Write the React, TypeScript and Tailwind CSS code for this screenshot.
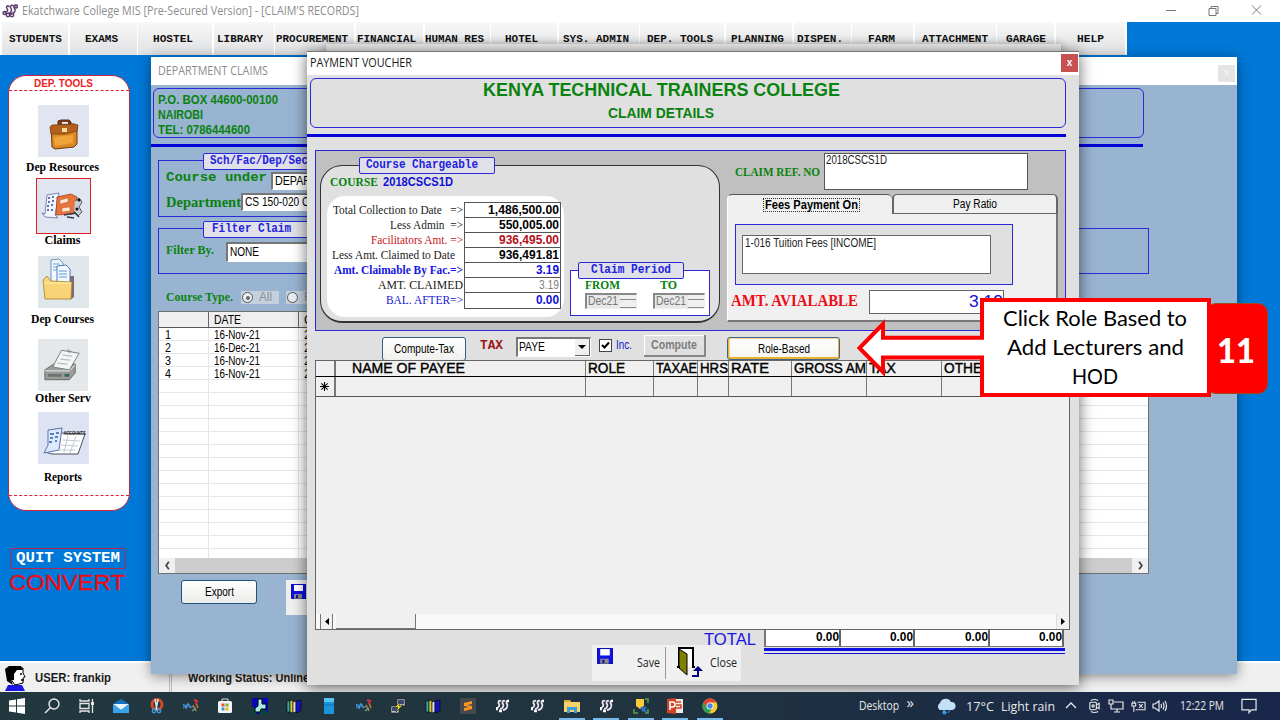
import { useLayoutEffect, useRef, useState } from "react";
import type { ReactNode } from "react";

/** A line of text condensed or expanded to the width its class gives it. */
function Fit({ className = "", children }: { className?: string; children: ReactNode }) {
  const outer = useRef<HTMLSpanElement>(null);
  const inner = useRef<HTMLSpanElement>(null);
  const [scale, setScale] = useState(1);
  useLayoutEffect(() => {
    if (outer.current && inner.current && inner.current.offsetWidth > 0) {
      setScale(outer.current.clientWidth / inner.current.getBoundingClientRect().width);
    }
  }, []);
  return (
    <span ref={outer} className={"block shrink-0 whitespace-pre " + className}>
      <span ref={inner} className="inline-block origin-left" style={{ transform: `scaleX(${scale})` }}>
        {children}
      </span>
    </span>
  );
}

const mono = "font-['Liberation_Mono',monospace] font-bold";
const serif = "font-['Liberation_Serif',serif]";
const segoe = "font-['Open_Sans','Noto_Sans',sans-serif]";

const menu = [
  { t: "STUDENTS", b: "w-[66px]", f: "w-[53px]" },
  { t: "EXAMS", b: "w-[67px] pr-[4px]", f: "w-[33px]" },
  { t: "HOSTEL", b: "w-[74px] pr-[4px]", f: "w-[40px]" },
  { t: "LIBRARY", b: "w-[60px] pr-[8px]", f: "w-[46px]" },
  { t: "PROCUREMENT", b: "w-[79px] pr-[6px]", f: "w-[72px]" },
  { t: "FINANCIAL", b: "w-[67px] pr-[5px]", f: "w-[59px]" },
  { t: "HUMAN RES", b: "w-[65px] pr-[6px]", f: "w-[59px]" },
  { t: "HOTEL", b: "w-[66px] pr-[6px]", f: "w-[33px]" },
  { t: "SYS. ADMIN", b: "w-[80px] pr-[6px]", f: "w-[66px]" },
  { t: "DEP. TOOLS", b: "w-[84px] pr-[4px]", f: "w-[66px]" },
  { t: "PLANNING", b: "w-[66px] pr-[3px]", f: "w-[53px]" },
  { t: "DISPEN.", b: "w-[57px] pr-[4px]", f: "w-[46px]" },
  { t: "FARM", b: "w-[61px] pr-[2px]", f: "w-[27px]" },
  { t: "ATTACHMENT", b: "w-[81px]", f: "w-[66px]" },
  { t: "GARAGE", b: "w-[57px]", f: "w-[40px]" },
  { t: "HELP", b: "w-[69px]", f: "w-[27px]" },
];

function Logo({ className = "h-4 w-4", color = "#5f3f70" }: { className?: string; color?: string }) {
  return (
    <svg viewBox="0 0 16 16" className={className} fill="none" stroke={color} strokeWidth="1.5" strokeLinecap="round">
      <path d="M7 3.5C5.500 2 3.500 4 5 5.500S5.500 9 3 9M11 2.500C9 1.500 7.500 4 9 5.500S9 10 6 10.500M14.500 2.500C12.500 1.500 11 4 12.500 5.500S13 10 9.500 11" />
      <circle cx="2.500" cy="10" r="1.500" />
      <circle cx="6" cy="12" r="1.700" />
      <circle cx="10" cy="12" r="1.700" />
      <circle cx="14" cy="3.500" r="1.500" />
    </svg>
  );
}

function Briefcase() {
  return (
    <svg viewBox="0 0 51 52" className="h-[52px] w-[51px] bg-[#e1e5f2]">
      <path d="M20 20v-4l3-1h8l2 2v4" fill="#7c3a18" stroke="#5a2a10" />
      <path d="M24 19v-2h6v2" fill="#e1e5f2" />
      <path d="M13 21l23-2 3 2 0 18-3 3-19 2-3-2z" fill="#d98824" stroke="#6b3a12" strokeWidth="1" />
      <path d="M12 22l2-2 22-1 4 1-1 6-12 3-14 0z" fill="#b5611e" stroke="#6b3a12" strokeWidth=".7" />
      <path d="M16 32l19-2v8l-18 3z" fill="#f0a338" />
      <rect x="24" y="23" width="5" height="4" fill="#f7dca0" />
    </svg>
  );
}
function ClaimsIcon() {
  return (
    <svg viewBox="0 0 53 54" className="h-[54px] w-[53px] bg-[#e1e5f2]">
      <path d="M10 16l12-2-4 22 3 3-13-1-3-4 3 1z" fill="#f4f7ff" stroke="#5a6e9a" strokeWidth=".8" />
      <path d="M11 19h2M11 23h2M10 27h2M10 31h2M15 18h2M15 22h2M14 26h2M14 31h2" stroke="#27488c" strokeWidth="1.500" />
      <path d="M20 18l14-3 6 3-3 17-18 1z" fill="#e8743c" stroke="#a0431c" strokeWidth=".8" />
      <path d="M23 21l8-2v4l-8 2zM25 29l8-1v4l-8 1z" fill="#ffe8d4" stroke="#b5603a" strokeWidth=".5" />
      <path d="M38 22l4-3 3 4-3 5 3 5-4 4-4-5" fill="#c8cdd6" stroke="#55595f" />
      <circle cx="42" cy="21" r="1.600" fill="#111" />
      <circle cx="40" cy="30" r="1.600" fill="#111" />
      <path d="M27 36l11-2 4 4M30 38l7 1" stroke="#343a4a" strokeWidth="1.600" fill="none" />
    </svg>
  );
}
function FolderIcon() {
  return (
    <svg viewBox="0 0 51 52" className="h-[52px] w-[51px] bg-[#e0e7ea]">
      <path d="M30 20h6v21l-4 3z" fill="#7a6a7a" />
      <path d="M13 4l8-1 4 4v22H13z" fill="#f3f8ff" stroke="#6d94c5" />
      <path d="M15 8h7M15 11h8M15 14h6" stroke="#70a5dc" />
      <path d="M19 10l9-1 4 4v14H19z" fill="#f3f8ff" stroke="#4d7db8" />
      <path d="M21 15h8M21 18h8M21 21h8" stroke="#5a98dc" />
      <path d="M5 24l4-4 4 5 21 1-1 17H7z" fill="#f8d477" stroke="#a47c28" strokeWidth=".8" />
      <path d="M6 27h27" stroke="#fff0b0" />
    </svg>
  );
}
function ScannerIcon() {
  return (
    <svg viewBox="0 0 51 52" className="h-[52px] w-[50px] bg-[#e4e8ea]">
      <path d="M7 31l9-6h22v9l-6 7H7z" fill="#9a9d9a" stroke="#555" strokeWidth=".8" />
      <path d="M7 32h25l6-6" stroke="#eee" fill="none" />
      <path d="M24 11l18 3-10 17-17-3z" fill="#f4f6f6" stroke="#7a7f80" />
      <path d="M25 16l10 1M23 20l10 1M20 24l10 1" stroke="#b5bcc0" strokeWidth="1.300" />
      <path d="M31 10l1 4M30 12h4" stroke="#778899" />
      <path d="M10 35h14v3H10z" fill="#6e7472" />
      <path d="M27 35h5v3h-5z" fill="#2f6a5b" />
    </svg>
  );
}
function ReportsIcon() {
  return (
    <svg viewBox="0 0 51 52" className="h-[52px] w-[51px] bg-[#dde3f3]">
      <path d="M22 21l25 1-7 20H14l-7-2z" fill="#fff" stroke="#4a4f5a" strokeWidth="1" />
      <path d="M10 18l14-2-3 22-15 3 4-8z" fill="#dce9ff" stroke="#5a74a8" />
      <path d="M12 22h4M12 26h3M11 30h3M18 21h3M17 25h3M17 29h2" stroke="#2e5da8" strokeWidth="1.500" />
      <path d="M25 28l17 1M23 33l17 1M21 38l16 0M30 24l-4 16M38 24l-6 17" stroke="#c3cad6" fill="none" />
      <text x="25.500" y="23" fontSize="5" fontWeight="700" fill="#2a1a1a" fontFamily="Liberation Sans, sans-serif" textLength="22" lengthAdjust="spacingAndGlyphs">ACCOUNTS</text>
    </svg>
  );
}

const tools = [
  { t: "Dep Resources", f: "w-[73px]", icon: <Briefcase />, box: "mt-[15px] h-[53px]", lab: "mt-px" },
  { t: "Claims", f: "w-[36px]", icon: <ClaimsIcon />, box: "mt-[3px] h-[56px] border border-[#e02020]", lab: "-mt-[2px]" },
  { t: "Dep Courses", f: "w-[63px]", icon: <FolderIcon />, box: "mt-[8px] h-[53px]", lab: "mt-[2px]" },
  { t: "Other Serv", f: "w-[56px]", icon: <ScannerIcon />, box: "mt-[12px] h-[53px] -ml-[3px]", lab: "-mt-[2px]" },
  { t: "Reports", f: "w-[38px]", icon: <ReportsIcon />, box: "mt-[6px] h-[53px]", lab: "mt-[4px]" },
];

function Sidebar() {
  return (
    <div className="ml-2 flex w-[122px] shrink-0 flex-col pt-[20px]">
      <div className="h-[436px] rounded-[18px] border-[1.5px] border-[#c8243c] bg-white">
        <div className="flex h-[15px] justify-center border-b border-dashed border-[#e02030] pr-3">
          <Fit className="w-[59px] font-['Liberation_Sans'] text-[11px] leading-[15px] font-bold text-[#ee1c24]">DEP. TOOLS</Fit>
        </div>
        <div className="-mt-px flex flex-col items-center">
          {tools.map((x) => (
            <div key={x.t} className="flex flex-col items-center pr-[13px]">
              <div className={"ml-[1px] shrink-0 " + x.box}>{x.icon}</div>
              <Fit className={`${serif} text-[12px] leading-[16px] font-bold text-black ${x.f} ${x.lab}`}>{x.t}</Fit>
            </div>
          ))}
        </div>
        <div className="mt-[10px] border-t border-dashed border-[#e02030]" />
      </div>
      <div className="mt-[37px] ml-[2px] flex h-[21px] w-[116px] items-center justify-center rounded-[2px] border border-[#b5284c]">
        <Fit className={`${mono} w-[104px] text-[14px] leading-[19px] text-white`}>QUIT SYSTEM</Fit>
      </div>
      <Fit className="mt-px ml-px w-[116px] font-['Liberation_Sans'] text-[22px] leading-[26px] text-[#ee0c14] [-webkit-text-stroke:0.3px_#ee0c14]">CONVERT</Fit>
    </div>
  );
}

function Legend({ className, children }: { className: string; children: ReactNode }) {
  return (
    <div className={`absolute flex justify-center rounded-[2px] border-[1.5px] border-[#2a2ad8] bg-[#e0e0e8] ${className}`}>
      {children}
    </div>
  );
}

function Floppy({ className = "h-[15px] w-[15px]" }: { className?: string }) {
  return (
    <svg viewBox="0 0 15 15" className={className}>
      <path d="M0 0h15v15H1l-1-1z" fill="#1010e8" />
      <rect x="3" y="1" width="9" height="6" fill="#fff" />
      <rect x="3" y="10" width="8" height="5" fill="#8a8a8a" />
      <rect x="5" y="11" width="2" height="3" fill="#1010a0" />
      <path d="M0 0h15v15H0z" fill="none" stroke="#101070" strokeWidth=".7" />
    </svg>
  );
}

const records = ["16-Nov-21", "16-Dec-21", "16-Nov-21", "16-Nov-21", "", "", "", "", "", "", "", "", "", "", "", "", "", ""];

function DepartmentWindow() {
  const sunken = "border border-t-[2px] border-l-[2px] border-[#fff] border-t-[#777] border-l-[#777] bg-white";
  const small = "font-['Liberation_Sans'] text-[12px] text-black";
  return (
    <div className="absolute top-[57px] left-[151px] flex h-[617px] w-[1086px] flex-col bg-[#99b4d1] font-['Liberation_Sans'] shadow-[0_2px_12px_rgba(0,0,0,0.45)]">
      <div className="flex h-7 shrink-0 items-center justify-between bg-white pr-0.5 pl-[7px]">
        <Fit className={`${segoe} w-[110px] text-[12px] leading-[20px] text-[#8c8c8c]`}>DEPARTMENT CLAIMS</Fit>
        <div className="mt-1 flex h-[17px] w-[17px] items-center justify-center bg-[#e4e4e4] text-[9px] font-bold text-[#f4f4f4]">x</div>
      </div>
      <div className="mt-[3px] ml-0.5 h-[50px] w-[991px] shrink-0 rounded-md border-[1.5px] border-[#2a2ad8] pt-[4px] pl-[4px] text-[12px] leading-[15px] font-bold text-[#0a820f]">
        <Fit className="w-[120px]">P.O. BOX 44600-00100</Fit>
        <Fit className="w-[45px]">NAIROBI</Fit>
        <Fit className="w-[92px]">TEL: 0786444600</Fit>
      </div>
      <div className="mt-[6px] h-[3px] w-[992px] shrink-0 bg-[#0202d8]" />
      <div className="relative mt-[13px] ml-[7px] h-[57px] w-[900px] shrink-0 border-[1.5px] border-[#2a2ad8] pl-[7px]">
        <Legend className="-top-[8px] left-[44px] h-[17px] w-[120px]">
          <Fit className={`${mono} -ml-2 w-[98px] text-[12px] leading-[15px] text-[#2222e0]`}>Sch/Fac/Dep/Sec</Fit>
        </Legend>
        <div className="flex pt-[11px]">
          <Fit className={`${mono} -mt-[3px] w-[101px] text-[13px] leading-[17px] text-[#0a820f]`}>Course under</Fit>
          <div className={`${sunken} ml-1 h-[18px] w-[120px] pl-0.5`}>
            <Fit className={`${small} w-[36px] leading-[15px]`}>DEPAR</Fit>
          </div>
        </div>
        <div className="flex pt-[3px]">
          <Fit className={`${serif} w-[75px] text-[15px] leading-[18px] font-bold text-[#0a820f]`}>Department</Fit>
          <div className={`${sunken} h-[18px] w-[160px] pl-0.5`}>
            <Fit className={`${small} w-[70px] leading-[15px]`}>CS 150-020 Co</Fit>
          </div>
        </div>
      </div>
      <div className="relative mt-[11px] ml-[7px] flex h-[46px] w-[991px] shrink-0 border-[1.5px] border-[#2a2ad8] pt-[13px] pl-[7px]">
        <Legend className="-top-[8px] left-[44px] h-[17px] w-[120px]">
          <Fit className={`${mono} -ml-[24px] w-[79px] text-[12px] leading-[15px] text-[#2222e0]`}>Filter Claim</Fit>
        </Legend>
        <Fit className={`${serif} w-[48px] text-[13px] leading-[16px] font-bold text-[#0a820f]`}>Filter By.</Fit>
        <div className={`${sunken} ml-[12px] h-[20px] w-[160px] pl-0.5`}>
          <Fit className={`${small} w-[29px] leading-[16px]`}>NONE</Fit>
        </div>
      </div>
      <div className="mt-[16px] ml-[15px] flex h-[15px] shrink-0 items-center">
        <Fit className={`${serif} w-[67px] text-[12px] leading-[15px] font-bold text-[#0a820f]`}>Course Type.</Fit>
        <div className="ml-2 flex h-[13px] w-[38px] items-center bg-[#c4d0de]">
          <span className="ml-px flex h-[11px] w-[11px] items-center justify-center rounded-full border-[1.5px] border-[#555] bg-[#e8eef4]">
            <span className="h-1 w-1 rounded-full bg-[#666]" />
          </span>
          <Fit className="ml-[6px] w-[13px] text-[12px] leading-[13px] text-[#8a8f96]">All</Fit>
        </div>
        <div className="ml-[7px] flex h-[13px] w-[60px] items-center bg-[#c4d0de]">
          <span className="ml-px h-[11px] w-[11px] rounded-full border-[1.5px] border-[#555] bg-[#e8eef4]" />
          <span className="ml-[6px] text-[12px] leading-[13px] text-[#8a8f96]">Full</span>
        </div>
      </div>
      <div className="mt-[6px] ml-[7px] flex h-[263px] w-[991px] shrink-0 flex-col border border-[#707070] bg-white">
        <div className="flex h-[16px] border-b border-[#555] bg-[#efefef]">
          <div className="w-[50px] border-r border-[#666]" />
          <div className="w-[90px] border-r border-[#666] pl-[5px]">
            <Fit className={`${small} w-[27px] leading-[16px]`}>DATE</Fit>
          </div>
          <div className={`${small} pl-[5px] leading-[16px]`}>CLAIM</div>
        </div>
        <div className="h-[230px] overflow-hidden">
          {records.map((d, i) => (
            <div key={i} className="flex h-[13px] border-b border-[#e6e6e6]">
              <div className="w-[50px] border-r border-[#e6e6e6] pl-[6px]">
                {d && <Fit className={`${small} w-[6px] leading-[14px]`}>{i + 1}</Fit>}
              </div>
              <div className="w-[90px] border-r border-[#e6e6e6] pl-[5px]">
                {d && <Fit className={`${small} w-[46px] leading-[14px]`}>{d}</Fit>}
              </div>
              <div className={`${small} pl-[5px] leading-[14px]`}>{d ? "2018" : ""}</div>
            </div>
          ))}
        </div>
        <div className="flex h-[15px] items-center justify-between bg-[#cdcdcd]">
          {["M7 2L4 6l3 4", "M4 2l3 4-3 4"].map((d) => (
            <div key={d} className="flex h-[15px] w-[16px] items-center justify-center bg-[#f0f0f0]">
              <svg viewBox="0 0 11 12" className="h-[11px] w-[11px]" fill="none" stroke="#444" strokeWidth="1.900"><path d={d} /></svg>
            </div>
          ))}
        </div>
      </div>
      <div className="mt-[6px] ml-[30px] flex shrink-0">
        <div className="flex h-[24px] w-[76px] items-center justify-center rounded-[3px] border border-[#1f5378] bg-linear-to-b from-white to-[#ececea]">
          <Fit className="w-[29px] text-[12px] leading-[20px] text-black">Export</Fit>
        </div>
        <div className="ml-[29px] h-[35px] w-[100px] bg-[#f0f0f0] pt-[4px] pl-[5px]"><Floppy /></div>
      </div>
    </div>
  );
}

const amounts = [
  { l: "Total Collection to Date   =>", lw: "w-[130px]", lc: "text-[#222]", v: "1,486,500.00", vw: "w-[71px]", vc: "font-bold text-black" },
  { l: "Less Admin  =>", lw: "w-[73px]", lc: "text-[#222]", v: "550,005.00", vw: "w-[60px]", vc: "font-bold text-black" },
  { l: "Facilitators Amt. =>", lw: "w-[92px]", lc: "text-[#c81420]", v: "936,495.00", vw: "w-[60px]", vc: "font-bold text-[#b41018]" },
  { l: "Less Amt. Claimed to Date", lw: "w-[123px] mr-[8px]", lc: "text-[#222]", v: "936,491.81", vw: "w-[60px]", vc: "font-bold text-black" },
  { l: "Amt. Claimable By Fac.=>", lw: "w-[129px]", lc: "font-bold text-[#1414e0]", v: "3.19", vw: "w-[23px]", vc: "font-bold text-[#1010d8]" },
  { l: "AMT. CLAIMED", lw: "w-[85px]", lc: "text-[#222]", v: "3.19", vw: "w-[20px]", vc: "text-[#808080]" },
  { l: "BAL. AFTER=>", lw: "w-[77px]", lc: "text-[#2020d0]", v: "0.00", vw: "w-[23px]", vc: "font-bold text-[#1010d8]" },
];

function Spinner() {
  return (
    <div className="flex h-[16px] w-[52px] items-center justify-between border border-t-[2px] border-l-[2px] border-[#eee] border-t-[#888] border-l-[#888] bg-[#e8e8e8] pl-[1px]">
      <Fit className="w-[30px] text-[12px] leading-[15px] text-[#777]">Dec21</Fit>
      <div className="flex h-[13px] w-[16px] flex-col justify-between bg-[#f0f0f0]">
        <div className="h-[5px] border-b border-[#888]" />
        <div className="h-[6px] border-b border-[#888]" />
      </div>
    </div>
  );
}

function ChargePanel() {
  return (
    <div className="relative mt-[14px] ml-1 h-[158px] w-[400px] shrink-0 rounded-[22px] border-[1.5px] border-b-2 border-[#333] bg-[#e0e0e0]">
      <Legend className="-top-[9px] left-[38px] h-[17px] w-[136px]">
        <Fit className={`${mono} -ml-[10px] w-[112px] text-[12px] leading-[15px] text-[#2222e0]`}>Course Chargeable</Fit>
      </Legend>
      <div className="flex pt-[8px] pl-[9px] text-[12px] leading-[16px] font-bold">
        <Fit className={`${serif} w-[48px] text-[#0a820f]`}>COURSE</Fit>
        <Fit className="ml-[5px] w-[70px] text-[#1010d8]">2018CSCS1D</Fit>
      </div>
      <div className="flex pt-[6px] pl-[6px]">
        <div className="flex h-[121px] w-[237px] rounded-[18px] bg-white pt-[6px]">
          <div className="w-[137px]">
            {amounts.map((a) => (
              <div key={a.l} className="flex h-[15px] justify-end pr-[1px]">
                <Fit className={`${serif} text-[12.5px] leading-[17px] ${a.lw} ${a.lc}`}>{a.l}</Fit>
              </div>
            ))}
          </div>
          <div className="h-[107px] w-[97px] border border-[#555]">
            {amounts.map((a) => (
              <div key={a.l} className="flex h-[15px] justify-end border-b border-[#555] pr-[1px] last:border-b-0">
                <Fit className={`text-[12px] leading-[15px] ${a.vw} ${a.vc}`}>{a.v}</Fit>
              </div>
            ))}
          </div>
        </div>
        <div className="relative mt-[74px] ml-[6px] h-[46px] w-[140px] border-[1.5px] border-[#2a2ad8] bg-white">
          <Legend className="-top-[9px] left-[7px] h-[17px] w-[106px]">
            <Fit className={`${mono} w-[80px] text-[12px] leading-[15px] text-[#2222e0]`}>Claim Period</Fit>
          </Legend>
          <div className="grid grid-cols-[68px_1fr] pt-[7px] pl-[14px]">
            <Fit className={`${serif} w-[35px] text-[12px] leading-[15px] font-bold text-[#0a820f]`}>FROM</Fit>
            <Fit className={`${serif} ml-[7px] w-[17px] text-[12px] leading-[15px] font-bold text-[#0a820f]`}>TO</Fit>
            <Spinner />
            <Spinner />
          </div>
        </div>
      </div>
    </div>
  );
}

function FeesPanel() {
  return (
    <div className="ml-[7px] flex w-[332px] shrink-0 flex-col pt-[2px]">
      <div className="flex">
        <Fit className={`${serif} mt-[10px] ml-[8px] w-[85px] text-[12px] leading-[18px] font-bold text-[#0a820f]`}>CLAIM REF. NO</Fit>
        <div className="ml-[4px] h-[37px] w-[204px] border border-[#555] bg-white">
          <Fit className="ml-px w-[61px] text-[12px] leading-[13px] text-[#222]">2018CSCS1D</Fit>
        </div>
      </div>
      <div className="mt-[4px] flex h-[20px] items-end">
        <div className="flex h-[20px] w-[165px] justify-center rounded-t-[5px] border-t border-l border-[#fff] border-t-[#555] bg-[#f0f0f0] pt-[3px] pl-[3px]">
          <div className="flex h-[14px] w-[97px] justify-center border border-dotted border-[#333]">
            <Fit className="w-[93px] text-[12px] leading-[13px] font-bold text-black">Fees Payment On</Fit>
          </div>
        </div>
        <div className="flex h-[20px] w-[166px] justify-center rounded-t-[5px] border-t border-r-2 border-b border-l-2 border-[#666] bg-[#f0f0f0] pt-[2px]">
          <Fit className="w-[44px] text-[12px] leading-[15px] text-black">Pay Ratio</Fit>
        </div>
      </div>
      <div className="h-[108px] w-[331px] border-r-2 border-b-2 border-l border-[#777] border-l-white bg-[#f0f0f0] pt-[10px] pl-[7px]">
        <div className="h-[61px] w-[278px] border-[1.5px] border-[#2a2ad8] bg-[#e0e0e0] pt-[10px] pl-[6px]">
          <div className="h-[39px] w-[249px] border border-[#666] bg-white">
            <Fit className="ml-[2px] w-[131px] text-[12px] leading-[14px] text-[#222]">1-016 Tuition Fees [INCOME]</Fit>
          </div>
        </div>
        <div className="mt-[5px] flex">
          <Fit className={`${serif} -ml-[4px] w-[127px] text-[16px] leading-[22px] font-bold text-[#ee0c14]`}>AMT. AVIALABLE</Fit>
          <div className="ml-[11px] flex h-[24px] w-[135px] justify-end border border-[#666] bg-white">
            <Fit className="w-[34px] text-[17px] leading-[21px] text-[#1010d8]">3.19</Fit>
          </div>
        </div>
      </div>
    </div>
  );
}

const columns = [
  { t: "", c: "w-[20px] border-r-2", f: "w-0" },
  { t: "NAME OF PAYEE", c: "w-[250px] border-r pl-[16px]", f: "w-[113px]" },
  { t: "ROLE", c: "w-[68px] border-r pl-[2px]", f: "w-[37px]" },
  { t: "TAXAE", c: "w-[44px] border-r pl-[2px]", f: "w-[41px]" },
  { t: "HRS", c: "w-[31px] border-r pl-[2px]", f: "w-[28px]" },
  { t: "RATE", c: "w-[63px] border-r pl-[2px]", f: "w-[38px]" },
  { t: "GROSS AM", c: "w-[75px] border-r pl-[2px]", f: "w-[72px]" },
  { t: "TAX", c: "w-[75px] border-r pl-[2px]", f: "w-[27px]" },
  { t: "OTHE", c: "w-[80px] border-r pl-[2px]", f: "w-[38px]" },
  { t: "", c: "grow", f: "w-0" },
];

function PaymentVoucher() {
  return (
    <div className="absolute top-[51px] left-[307px] flex h-[634px] w-[772px] flex-col bg-[#e0e0e0] font-['Liberation_Sans'] shadow-[0_2px_14px_rgba(0,0,0,0.6)]">
      <div className="flex h-6 shrink-0 justify-between border-t border-[#777] bg-white pr-px pl-[3px]">
        <Fit className={`${segoe} w-[102px] text-[12px] leading-[21px] text-[#1a1a1a]`}>PAYMENT VOUCHER</Fit>
        <div className="mt-[2px] flex h-[18px] w-[17px] items-center justify-center bg-[#c75050] pb-0.5 text-[10px] font-bold text-white">x</div>
      </div>
      <div className="mt-[3px] ml-[3px] flex h-[50px] w-[756px] shrink-0 flex-col items-center rounded-md border-[1.5px] border-[#2a2ad8] pr-[54px] font-bold text-[#0a820f]">
        <Fit className="w-[357px] text-[18px] leading-[23px]">KENYA TECHNICAL TRAINERS COLLEGE</Fit>
        <Fit className="w-[106px] text-[14px] leading-[22px]">CLAIM DETAILS</Fit>
      </div>
      <div className="mt-[6px] h-[3px] w-[759px] shrink-0 bg-[#0202d8]" />
      <div className="mt-[13px] ml-[8px] flex h-[181px] w-[751px] shrink-0 border-[1.5px] border-[#2a2ad8] bg-[#c0c0c0]">
        <ChargePanel />
        <FeesPanel />
      </div>
      <div className="flex h-[29px] shrink-0 items-start pl-[75px]">
        <div className="mt-[6px] flex h-[24px] w-[84px] items-center justify-center rounded-[3px] border-[1.5px] border-[#2d5f88] bg-linear-to-b from-white to-[#f0f0ee]">
          <Fit className="w-[60px] text-[12px] leading-[20px] text-black">Compute-Tax</Fit>
        </div>
        <Fit className={`${mono} mt-[7px] ml-[14px] w-[23px] text-[12px] leading-[16px] text-[#9c1418]`}>TAX</Fit>
        <div className="mt-[6px] ml-[13px] flex h-[20px] w-[75px] justify-between border border-t-[2px] border-l-[2px] border-[#fff] border-t-[#777] border-l-[#777] bg-white">
          <Fit className="ml-px w-[26px] text-[12px] leading-[16px] text-black">PAYE</Fit>
          <div className="flex w-[15px] items-center justify-center border-r border-b border-[#666] bg-[#f0f0f0]">
            <svg viewBox="0 0 8 5" className="h-[5px] w-[8px]"><path d="M0 0h8L4 4z" fill="#000" /></svg>
          </div>
        </div>
        <div className="mt-[8px] ml-[8px] flex h-[13px] w-[13px] items-center justify-center border-[1.5px] border-[#444] bg-white">
          <svg viewBox="0 0 9 9" className="h-[9px] w-[9px]" fill="none" stroke="#000" strokeWidth="2"><path d="M1 4l2.500 2.500L8 1.500" /></svg>
        </div>
        <Fit className="mt-[6px] ml-[4px] w-[16px] text-[12px] leading-[16px] text-[#2020d0]">Inc.</Fit>
        <div className="mt-[4px] ml-[12px] flex h-[22px] w-[62px] items-center justify-center border-r-2 border-b-2 border-[#888] bg-[#e0e0e0] shadow-[inset_1px_1px_0_#fff]">
          <Fit className="w-[46px] text-[12px] leading-[18px] font-bold text-[#7c7c7c]">Compute</Fit>
        </div>
        <div className="mt-[6px] ml-[21px] flex h-[23px] w-[113px] items-center justify-center rounded-[3px] border-[1.5px] border-[#3d648a] bg-linear-to-b from-white to-[#f4f4f0] shadow-[inset_0_-1px_0_1px_#eeb02f,inset_1px_0_0_1px_#f8d98c]">
          <Fit className="w-[52px] text-[12px] leading-[20px] text-black">Role-Based</Fit>
        </div>
      </div>
      <div className="ml-[8px] flex h-[270px] w-[755px] shrink-0 flex-col border border-[#666] bg-[#f0f0f0]">
        <div className="flex h-[16px] shrink-0 border-b-[1.5px] border-black">
          {columns.map((c, i) => (
            <div key={i} className={`shrink-0 border-[#777] ${c.c}`}>
              {c.t && <Fit className={`text-[14px] leading-[15px] font-medium text-black [-webkit-text-stroke:0.4px_black] ${c.f}`}>{c.t}</Fit>}
            </div>
          ))}
        </div>
        <div className="flex h-[20px] shrink-0 border-b-[1.5px] border-[#555]">
          {columns.map((c, i) => (
            <div key={i} className={`flex shrink-0 items-center border-[#777] ${c.c}`}>
              {i === 0 && (
                <svg viewBox="0 0 10 10" className="ml-[4px] h-[9px] w-[9px]" stroke="#000" strokeWidth="1.200"><path d="M5 0v10M0 5h10M1.500 1.500l7 7M8.500 1.500l-7 7" /></svg>
              )}
            </div>
          ))}
        </div>
        <div className="grow" />
        <div className="flex h-[15px] shrink-0 items-stretch bg-[#f8f8f8] pl-[4px]">
          <div className="flex w-[13px] items-center justify-center border-r border-l border-[#777] bg-[#f0f0f0]">
            <svg viewBox="0 0 4 7" className="h-[7px] w-[4px]"><path d="M4 0v7L0 3.500z" /></svg>
          </div>
          <div className="ml-[3px] w-[80px] border-r border-b border-[#777] bg-[#f0f0f0]" />
          <div className="grow" />
          <div className="flex w-[13px] items-center justify-center border-l border-[#ddd] bg-[#f0f0f0]">
            <svg viewBox="0 0 4 7" className="h-[7px] w-[4px]"><path d="M0 0v7l4-3.500z" /></svg>
          </div>
        </div>
      </div>
      <div className="flex shrink-0">
        <div className="ml-[285px] w-[172px]">
          <div className="flex h-[15px] pl-[112px]">
            <Fit className="w-[52px] text-[17px] leading-[19px] text-[#1616e0]">TOTAL</Fit>
          </div>
          <div className="flex h-[36px] w-[149px] bg-[#f0f0f0]">
            <div className="pt-[3px] pl-[5px]"><Floppy className="h-[16px] w-[16px]" /></div>
            <Fit className={`${segoe} ml-[24px] w-[23px] text-[12px] leading-[35px] text-[#222]`}>Save</Fit>
            <div className="mt-[2px] ml-[5px] h-[32px] w-px bg-[#999]" />
            <svg viewBox="0 0 27 31" className="mt-[2px] ml-[11px] h-[31px] w-[27px]">
              <path d="M2 20V1h14v19" fill="#fff" stroke="#000" strokeWidth="2" />
              <path d="M2 2l8 5v21l-8-7z" fill="#808000" stroke="#000" />
              <path d="M0 20h3M15 20h3" stroke="#000" strokeWidth="2" />
              <path d="M15 29h6v-6" stroke="#000080" strokeWidth="2" fill="none" />
              <path d="M16 24l5-5 5 5z" fill="#000080" />
            </svg>
            <Fit className={`${segoe} ml-[6px] w-[27px] text-[12px] leading-[35px] text-[#222]`}>Close</Fit>
          </div>
        </div>
        <div>
          <div className="flex h-[17px] w-[300px] border-b border-l-2 border-[#777] bg-white">
            {[0, 1, 2, 3].map((n) => (
              <div key={n} className="flex grow justify-end border-r-2 border-[#666]">
                <Fit className="w-[23px] text-[12px] leading-[14px] font-bold text-black">0.00</Fit>
              </div>
            ))}
          </div>
          <div className="mt-[1px] h-[6px] w-[301px] border-t-[3px] border-b-[1.5px] border-[#1010e0]" />
        </div>
      </div>
    </div>
  );
}

function Callout() {
  return (
    <div className="absolute top-[296px] left-[855px] h-[104px] w-[415px] font-['Lato']">
      <div className="absolute top-[7px] left-[351px] flex h-[91px] w-[62px] items-center justify-center rounded-[10px] border border-[#9a4a20] bg-[#fe0000] pr-[2px]">
        <Fit className="w-[38px] text-[35px] leading-[40px] font-black text-white">11</Fit>
      </div>
      <svg viewBox="0 0 415 104" className="absolute inset-0 h-[104px] w-[415px]">
        <path d="M127 4H354V99H127V61.500H28V76L4.500 52L28 28V41.700H127z" fill="#fff" stroke="#fe0000" strokeWidth="4" />
      </svg>
      <div className="absolute top-[7px] left-[126px] flex w-[228px] flex-col items-center text-[22px] leading-[29px] text-black">
        <Fit className="w-[184px]">Click Role Based to</Fit>
        <Fit className="w-[177px]">Add Lecturers and</Fit>
        <Fit className="w-[46px]">HOD</Fit>
      </div>
    </div>
  );
}

const helix = (
  <g fill="none" strokeWidth="1.500">
    <path d="M0 6l3 4 2-4 3 4" stroke="#4a9ad8" />
    <path d="M0 10l3-3 4 2h3" stroke="#3c7cb5" />
    <path d="M10 7l3 6M13 5l2 5" stroke="#c8783c" />
    <path d="M11 2l3 1-1 3" stroke="#e0303c" strokeWidth="2" />
    <path d="M9 13l4-3" stroke="#5aa888" />
  </g>
);
const books = (
  <g stroke="#000" strokeWidth=".6">
    <path d="M1 3h3v11H1z" fill="#38a8a0" />
    <path d="M4 2l3 1v12l-3-1z" fill="#d8c840" />
    <path d="M7 4l3-1v11l-3 1z" fill="#ddd" />
    <path d="M10 3l5-1v11l-5 2z" fill="#1414c0" />
  </g>
);
const whiteLogo = (
  <g fill="none" stroke="#f0e4f0" strokeWidth="1.800">
    <path d="M7 3c-3-1-3 2-2 3s0 4-3 4M11 3c-3-1-3 2-2 3s0 5-3 5M15 3c-3-1-3 2-2 3s0 6-4 6" />
    <path d="M2 11h2M5 13h3M13 3h2" stroke="#fff" strokeWidth="2.500" />
  </g>
);

const taskIcons: ReactNode[] = [
  <g fill="#fff"><path d="M0 2.500l7-1v6H0zM8 1.300L16 0v7.500H8zM0 8.500h7v6l-7-1zM8 8.500h8V16l-8-1.200z" /></g>,
  <g fill="none" stroke="#e8e8e8" strokeWidth="1.400"><circle cx="10" cy="6" r="5" /><path d="M6.500 9.500L1 15" /></g>,
  <g fill="none" stroke="#e8e8e8" strokeWidth="1.300"><path d="M1 1v2h9V1M1 15v-2h9v2M1 5.500h9v5H1zM13.500 1v14" /><path d="M13.500 4v3" strokeWidth="3" /></g>,
  <g><path d="M0 6l8-5 8 5v9H0z" fill="#1672c4" /><path d="M0 6h16l-8 6z" fill="#e8f4fc" /><path d="M0 15V6l8 6 8-6v9z" fill="#38a4ec" /></g>,
  <g fill="none"><circle cx="9" cy="6.500" r="5" stroke="#d84c24" strokeWidth="3" /><path d="M7 1l2 11M10 1L8 12" stroke="#e0e4e8" strokeWidth="1.500" /><circle cx="6" cy="13" r="1.700" stroke="#3c98e0" strokeWidth="1.400" /><circle cx="11" cy="13" r="1.700" stroke="#3c98e0" strokeWidth="1.400" /></g>,
  helix,
  <g><path d="M5 4V1h6v3" fill="none" stroke="#ddd" /><rect x="1" y="3" width="14" height="12" rx="1.500" fill="#f4f4f4" /><path d="M4.500 5.500h3v3h-3z" fill="#e8502c" /><path d="M8.500 5.500h3v3h-3z" fill="#6cb43c" /><path d="M4.500 9.500h3v3h-3z" fill="#2c9ce0" /><path d="M8.500 9.500h3v3h-3z" fill="#f4b81c" /></g>,
  <g><path d="M0 0h16v16H0z" fill="#0808b8" /><path d="M0 9l6 2-2 5H0zM9 10l7 4v2H8z" fill="#064838" /><path d="M6 1h4v5h4v5H9l-1 3H3v-4l3-2z" fill="#a8ece8" stroke="#000" /></g>,
  books,
  <g><rect x="3" y="0" width="10" height="16" fill="#1c94dc" /><path d="M3 0h10v4H3z" fill="#56c4f4" /><path d="M3 7h10" stroke="#1070b8" /></g>,
  helix,
  <g stroke="#222" strokeWidth=".6"><path d="M7 1h8v7H7zM1 8h8v7H1z" fill="#b8bcc8" /><path d="M8.500 2.500h5v3h-5zM2.500 9.500h5v3h-5z" fill="#3848a0" /><path d="M10 4L4 10l4-1-2 5 7-7-4 1z" fill="#f8e820" /></g>,
  books,
  <g><rect x="0" y="0" width="16" height="16" rx="1.500" fill="#48484c" /><path d="M4 5l8-2v3l-5 1 5 1v3l-8 2v-3l5-1-5-1z" fill="#f89820" /></g>,
  whiteLogo,
  whiteLogo,
  <g><path d="M0 2h6l1 2h9v10H0z" fill="#f8d468" /><path d="M0 2h6l1 2H0z" fill="#e0a838" /><path d="M3 15V9h10v6h-3v-3H6v3z" fill="#3c9ce4" /></g>,
  whiteLogo,
  <g><path d="M3 1h8v7l-4 3-4-3z" fill="#f8cc38" /><path d="M12 1h3v4M15 11v4h-3M1 11v4h4" fill="none" stroke="#58a048" strokeWidth="1.500" /><path d="M8 9l5 5M13 9l-4 4" stroke="#2c78c8" strokeWidth="2" /></g>,
  <g><path d="M6 1h10v14H6z" fill="#f4e8e4" /><path d="M9 4h5M9 7h5v3H9" stroke="#d04424" strokeWidth="1.500" fill="none" /><path d="M0 1l9-1v16l-9-1z" fill="#d04424" /><path d="M3 12V4h2.500a2 2 0 010 5H3" fill="none" stroke="#fff" strokeWidth="1.600" /></g>,
  <g><circle cx="8" cy="8" r="7.500" fill="#f8cc2c" /><path d="M8 8L1.500 4.300A7.500 7.500 0 007 15.500l3-5z" fill="#30a050" /><path d="M1.500 4.300A7.500 7.500 0 0114.500 4.300L8 4.500 4.500 9z" fill="#e04434" /><circle cx="8" cy="8" r="3.500" fill="#fff" /><circle cx="8" cy="8" r="2.700" fill="#4488ec" /></g>,
];

function Taskbar() {
  return (
    <div className={`${segoe} relative z-10 flex h-7 shrink-0 items-center bg-linear-to-r from-[#22383f] via-[#20333f] to-[#18264a] text-[12px] leading-[26px] text-[#e8e8e8]`}>
      <div className="flex h-full">
        {taskIcons.map((g, i) => (
          <div key={i} className="flex h-full w-[34.65px] flex-col items-center justify-between pt-[6px]">
            <svg viewBox="0 0 16 16" className="h-4 w-4">{g}</svg>
            {i > 15 && <div className="h-0.5 w-[26px] bg-[#76b9ed]" />}
          </div>
        ))}
      </div>
      <Fit className="ml-[132px] w-[40px]">Desktop</Fit>
      <span className="-mt-2 ml-[7px] w-[30px] text-[15px]">»</span>
      <svg viewBox="0 0 20 17" className="h-[17px] w-[20px] shrink-0">
        <path d="M4 12a4 4 0 010-7 6 6 0 0111-1 4 4 0 011 8z" fill="#c4e0f8" />
        <path d="M8 12q-3 4 1 4 3-1-1-4zM14 12l-2 3" fill="#3c98e8" stroke="#3c98e8" />
      </svg>
      <Fit className="ml-[10px] w-[28px] text-[13px]">17°C</Fit>
      <Fit className="ml-[7px] w-[54px] text-[13px]">Light rain</Fit>
      <svg viewBox="0 0 12 12" className="ml-[10px] h-3 w-3 shrink-0" fill="none" stroke="#e8e8e8" strokeWidth="1.300"><path d="M1 8l5-5 5 5" /></svg>
      <svg viewBox="0 0 14 16" className="ml-[11px] h-[16px] w-[13px] shrink-0" fill="none" stroke="#e8e8e8" strokeWidth="1.200"><path d="M3 2q4-2 8 0M3 14q4 2 8 0" /><rect x="2" y="4" width="7" height="8" rx="1" /><circle cx="5.500" cy="8" r="1.200" /><path d="M9 7l3-2v6l-3-2" /></svg>
      <svg viewBox="0 0 16 15" className="ml-[7px] h-[15px] w-[16px] shrink-0" fill="none" stroke="#e8e8e8" strokeWidth="1.200"><path d="M6 3h9v7H3V8M6 13h6M9 10v3M1 1h4v4H1zM3 5v3" /></svg>
      <svg viewBox="0 0 16 14" className="ml-[7px] h-[14px] w-[15px] shrink-0" fill="none" stroke="#e8e8e8" strokeWidth="1.200"><path d="M7 3h8v8H5M8.500 5l4 4M12.500 5l-4 4M1 4h4v3H1zM3 7v6M2 2v2M4 2v2" /></svg>
      <svg viewBox="0 0 16 14" className="ml-[6px] h-[14px] w-[16px] shrink-0" fill="none" stroke="#e8e8e8" strokeWidth="1.200"><path d="M1 5h2l4-3v10L3 9H1zM9 5q1 2 0 4M11 3.500q2 3.500 0 7M13 2q3 5 0 10" /></svg>
      <Fit className="ml-[12px] w-[44px]">12:22 PM</Fit>
      <svg viewBox="0 0 17 17" className="ml-[17px] h-[16px] w-[16px] shrink-0" fill="none" stroke="#e8e8e8" strokeWidth="1.300"><path d="M1 1.500h15v11h-5l-2.500 3v-3H1z" /></svg>
    </div>
  );
}

export default function App() {
  return (
    <div className="relative flex h-[720px] w-[1280px] flex-col overflow-hidden bg-[#0078d7]">
      <div className="flex h-[22px] shrink-0 items-center bg-white pl-[2px]">
        <Logo />
        <Fit className={`${segoe} ml-[4px] w-[337px] text-[12px] leading-[20px] text-[#8c8c8c]`}>Ekatchware College MIS [Pre-Secured Version] - [CLAIM'S RECORDS]</Fit>
        <svg viewBox="0 0 100 12" className="ml-[805px] h-3 w-[100px] shrink-0" fill="none" stroke="#777">
          <path d="M2 5.500h10M45 3.500h7v7h-7zM47 3.500v-2h7v7h-2M88 .500l9 9M97 .500l-9 9" />
        </svg>
      </div>
      <div className="flex h-[33px] w-[1127px] shrink-0 gap-[1.6px] bg-white pl-[2px]">
        {menu.map((m) => (
          <div key={m.t} className={`flex shrink-0 justify-center bg-linear-to-b from-[#f8f8f8] to-[#e0e1e3] ${m.b}`}>
            <Fit className={`${mono} mt-[9px] text-[11px] leading-[16px] text-[#111] ${m.f}`}>{m.t}</Fit>
          </div>
        ))}
      </div>
      <div className="flex grow">
        <Sidebar />
      </div>
      <div className="flex h-[31px] shrink-0 border-t-2 border-white bg-[#f0f0f0] font-['Liberation_Sans'] text-[12px] leading-[30px] font-bold text-[#1a1a1a]">
        <svg viewBox="0 0 26 28" className="ml-[3px] h-[28px] w-[26px]">
          <path d="M2 28l3-6h14l3 6z" fill="#1818e0" />
          <path d="M8 5h12v5l2 4-2 1v5l-8 2-3-4z" fill="#fff" stroke="#000" />
          <path d="M2 6l4-3h12l2 4h-6l-3 4v6H8l2 5-6-4z" fill="#000" />
          <path d="M17 11h2M18 17h3" stroke="#000" strokeWidth="1.500" />
        </svg>
        <Fit className="ml-[6px] w-[76px]">USER: frankip</Fit>
        <div className="ml-[58px] w-[3px] border-x border-[#bbb]" />
        <Fit className="ml-[16px] w-[128px]">Working Status: Unlined</Fit>
      </div>
      <Taskbar />
      <DepartmentWindow />
      <div className="absolute top-[44px] left-[326px] h-[20px] w-[735px] bg-[#ececec] shadow-[0_0_8px_rgba(0,0,0,0.3)]" />
      <PaymentVoucher />
      <Callout />
    </div>
  );
}
